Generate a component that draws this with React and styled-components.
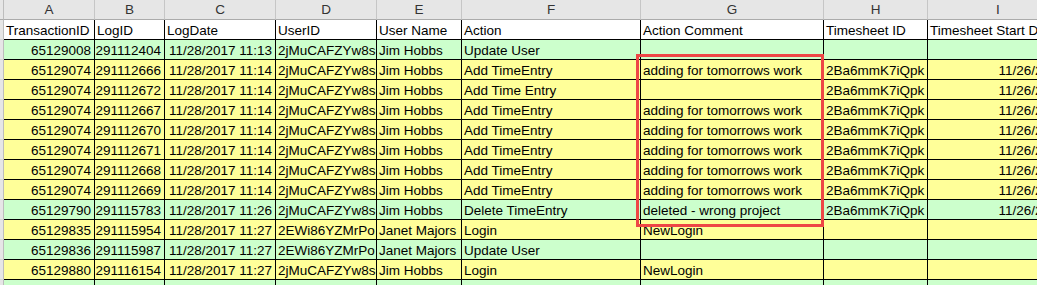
import React from 'react'
import styled, { createGlobalStyle } from 'styled-components'

const GlobalStyle = createGlobalStyle`
  html, body {
    margin: 0;
    padding: 0;
    background: #ffffff;
    overflow: hidden;
  }
  body {
    font-family: "Liberation Sans", Arial, sans-serif;
  }
`

const COLUMNS = '4px 91px 70px 111px 101px 85px 179px 183px 104px 141px'

const FILLS = {
  g: '#ccffcc',
  y: '#ffff99',
  w: '#ffffff',
}

const letters = ['A', 'B', 'C', 'D', 'E', 'F', 'G', 'H', 'I']

const headers = [
  'TransactionID',
  'LogID',
  'LogDate',
  'UserID',
  'User Name',
  'Action',
  'Action Comment',
  'Timesheet ID',
  'Timesheet Start Date',
]

const rows = [
  ['g', '65129008', '291112404', '11/28/2017 11:13', '2jMuCAFZYw8s', 'Jim Hobbs', 'Update User', '', '', ''],
  ['y', '65129074', '291112666', '11/28/2017 11:14', '2jMuCAFZYw8s', 'Jim Hobbs', 'Add TimeEntry', 'adding for tomorrows work', '2Ba6mmK7iQpk', '11/26/2017'],
  ['y', '65129074', '291112672', '11/28/2017 11:14', '2jMuCAFZYw8s', 'Jim Hobbs', 'Add Time Entry', '', '2Ba6mmK7iQpk', '11/26/2017'],
  ['y', '65129074', '291112667', '11/28/2017 11:14', '2jMuCAFZYw8s', 'Jim Hobbs', 'Add TimeEntry', 'adding for tomorrows work', '2Ba6mmK7iQpk', '11/26/2017'],
  ['y', '65129074', '291112670', '11/28/2017 11:14', '2jMuCAFZYw8s', 'Jim Hobbs', 'Add TimeEntry', 'adding for tomorrows work', '2Ba6mmK7iQpk', '11/26/2017'],
  ['y', '65129074', '291112671', '11/28/2017 11:14', '2jMuCAFZYw8s', 'Jim Hobbs', 'Add TimeEntry', 'adding for tomorrows work', '2Ba6mmK7iQpk', '11/26/2017'],
  ['y', '65129074', '291112668', '11/28/2017 11:14', '2jMuCAFZYw8s', 'Jim Hobbs', 'Add TimeEntry', 'adding for tomorrows work', '2Ba6mmK7iQpk', '11/26/2017'],
  ['y', '65129074', '291112669', '11/28/2017 11:14', '2jMuCAFZYw8s', 'Jim Hobbs', 'Add TimeEntry', 'adding for tomorrows work', '2Ba6mmK7iQpk', '11/26/2017'],
  ['g', '65129790', '291115783', '11/28/2017 11:26', '2jMuCAFZYw8s', 'Jim Hobbs', 'Delete TimeEntry', 'deleted - wrong project', '2Ba6mmK7iQpk', '11/26/2017'],
  ['y', '65129835', '291115954', '11/28/2017 11:27', '2EWi86YZMrPo', 'Janet Majors', 'Login', 'NewLogin', '', ''],
  ['g', '65129836', '291115987', '11/28/2017 11:27', '2EWi86YZMrPo', 'Janet Majors', 'Update User', '', '', ''],
  ['y', '65129880', '291116154', '11/28/2017 11:27', '2jMuCAFZYw8s', 'Jim Hobbs', 'Login', 'NewLogin', '', ''],
  ['g', '', '', '', '', '', '', '', '', ''],
]

// numeric columns are right aligned, like Excel does
const rightAligned = [true, true, true, false, false, false, false, false, true]

function App() {
  return (
    <>
      <GlobalStyle />
      <Sheet>
        <HeadRow>
          <Corner />
          {letters.map((l) => (
            <ColLetter key={l}>{l}</ColLetter>
          ))}
        </HeadRow>

        <Row>
          <RowStub />
          {headers.map((h) => (
            <Cell key={h} $fill="w">
              {h}
            </Cell>
          ))}
        </Row>

        {rows.map(([fill, ...cells], i) => (
          <Row key={i}>
            <RowStub />
            {cells.map((v, j) => (
              <Cell key={j} $fill={fill} $right={rightAligned[j]}>
                {v}
              </Cell>
            ))}
          </Row>
        ))}

        <Highlight />
      </Sheet>
    </>
  )
}

export default App

const Sheet = styled.div`
  position: relative;
  width: 1037px;
  height: 285px;
  overflow: hidden;
  font-size: 13.5px;
  color: #000;
`

const HeadRow = styled.div`
  display: grid;
  grid-template-columns: ${COLUMNS};
  height: 20px;
  background: #e6e6e6;
`

const Corner = styled.div`
  border-right: 1px solid #bdbdbd;
  border-bottom: 1px solid #ababab;
`

const ColLetter = styled.div`
  border-right: 1px solid #c6c6c6;
  border-bottom: 1px solid #ababab;
  text-align: center;
  line-height: 20px;
  color: #333;
  white-space: nowrap;
  overflow: hidden;
`

const Row = styled.div`
  display: grid;
  grid-template-columns: ${COLUMNS};
  height: 20px;
`

const RowStub = styled.div`
  background: #e6e6e6;
  border-right: 1px solid #bdbdbd;
  border-bottom: 1px solid #d4d4d4;
`

const Cell = styled.div`
  background: ${(p) => FILLS[p.$fill]};
  border-right: 1px solid #000;
  border-bottom: 1px solid #000;
  padding: 0 ${(p) => (p.$right ? '3px' : '0')} 0 ${(p) => (p.$right ? '0' : '2px')};
  text-align: ${(p) => (p.$right ? 'right' : 'left')};
  line-height: 21px;
  white-space: nowrap;
  overflow: hidden;
`

const Highlight = styled.div`
  position: absolute;
  left: 636px;
  top: 54px;
  width: 188px;
  height: 173px;
  box-sizing: border-box;
  border: 3px solid #ee4646;
  pointer-events: none;
`
